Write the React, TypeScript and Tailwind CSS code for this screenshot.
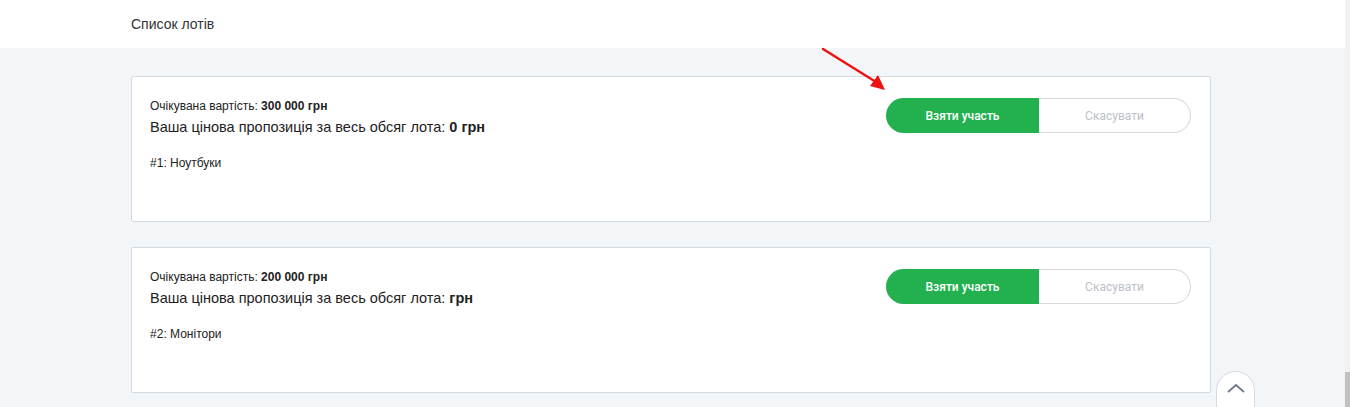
import React from 'react';

interface Lot {
    id: number;
    name: string;
    expected: string;
    offer: string;
}

const lots: Lot[] = [
    { id: 1, name: 'Ноутбуки', expected: '300 000 грн', offer: '0 грн' },
    { id: 2, name: 'Монітори', expected: '200 000 грн', offer: 'грн' },
];

const LotCard: React.FC<{ lot: Lot }> = ({ lot }) => (
    <div className="flex h-[146px] justify-between rounded-[2px] border border-[#d5d9e0] bg-white pl-[18px] pr-[19px] pt-[21px]">
        <div className="text-[#222]">
            <div className="text-[12px] leading-[16px]">
                Очікувана вартість: <b className="font-bold">{lot.expected}</b>
            </div>
            <div className="mt-[3px] text-[14.5px] leading-[20px]">
                Ваша цінова пропозиція за весь обсяг лота: <b className="font-bold">{lot.offer}</b>
            </div>
            <div className="mt-[18px] text-[12px] leading-[16px]">
                #{lot.id}: {lot.name}
            </div>
        </div>
        <div className="flex h-[35px] font-['Roboto',sans-serif] text-[12px]">
            <button className="h-[35px] w-[153px] rounded-l-full bg-[#23b150] font-medium text-white">
                Взяти участь
            </button>
            <button className="h-[35px] w-[152px] rounded-r-full border border-l-0 border-[#d5d9e0] bg-white text-[#bcc1c9]">
                Скасувати
            </button>
        </div>
    </div>
);

export default function App() {
    return (
        <div className="flex h-[407px] w-full overflow-hidden bg-[#f3f6f9] font-['Liberation_Sans',Arial,sans-serif]">
            <div className="relative flex-1">
                {/* Header */}
                <div className="flex h-[48px] items-center bg-white pl-[131px] text-[14px] text-[#333]">
                    Список лотів
                </div>

                {/* Lots */}
                <div className="ml-[131px] mt-[28px] flex w-[1080px] flex-col gap-[25px]">
                    {lots.map(lot => (
                        <LotCard key={lot.id} lot={lot} />
                    ))}
                </div>

                {/* Red annotation arrow */}
                <svg className="absolute left-[818px] top-[44px]" width="75" height="52" viewBox="0 0 75 52">
                    <line x1="5" y1="5" x2="58" y2="38" stroke="#ee1111" strokeWidth="2.5" strokeLinecap="round" />
                    <polygon points="67,46 52,42 60,31" fill="#ee1111" />
                </svg>

                {/* Back to top */}
                <button className="absolute left-[1216px] top-[371px] flex h-[50px] w-[39px] justify-center rounded-t-full border border-[#d5d9e0] bg-white pt-[10px]">
                    <svg width="20" height="12" viewBox="0 0 20 12">
                        <polyline points="2,10 10,3 18,10" fill="none" stroke="#6f7a89" strokeWidth="1.8" />
                    </svg>
                </button>
            </div>

            {/* Scrollbar */}
            <div className="flex w-[5px] flex-col bg-[#f1f1f1]">
                <div className="mt-[372px] flex-1 bg-[#c1c1c1]" />
            </div>
        </div>
    );
}
